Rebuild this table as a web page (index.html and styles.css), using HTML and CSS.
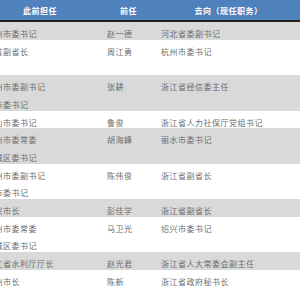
FILE: index.html
```html
<!DOCTYPE html>
<html lang="zh">
<head>
<meta charset="utf-8">
<link rel="stylesheet" href="styles.css">
</head>
<body>
<div class="sheet">
<table class="roster">
<colgroup><col class="c-prev"><col class="c-pred"><col class="c-dest"></colgroup>
<thead>
<tr><th>此前担任</th><th>前任</th><th>去向（现任职务）</th></tr>
</thead>
<tbody>
<tr class="shade"><td class="prev"><span class="t">州市委书记</span></td><td class="pred"><span class="t">赵一德</span></td><td class="dest"><span class="t">河北省委副书记</span></td></tr>
<tr><td class="prev"><span class="t">省副省长<br>&nbsp;</span></td><td class="pred"><span class="t">周江勇</span></td><td class="dest"><span class="t">杭州市委书记</span></td></tr>
<tr class="shade"><td class="prev"><span class="t">州市委副书记<br>市委书记</span></td><td class="pred"><span class="t">张耕</span></td><td class="dest"><span class="t">浙江省经信委主任</span></td></tr>
<tr><td class="prev"><span class="t">山市委书记</span></td><td class="pred"><span class="t">鲁俊</span></td><td class="dest"><span class="t">浙江省人力社保厅党组书记</span></td></tr>
<tr class="shade"><td class="prev"><span class="t">州市委常委<br>城区委书记</span></td><td class="pred"><span class="t">胡海峰</span></td><td class="dest"><span class="t">丽水市委书记</span></td></tr>
<tr><td class="prev"><span class="t">州市委副书记<br>市委书记</span></td><td class="pred"><span class="t">陈伟俊</span></td><td class="dest"><span class="t">浙江省副省长</span></td></tr>
<tr class="shade"><td class="prev"><span class="t">兴市长</span></td><td class="pred"><span class="t">彭佳学</span></td><td class="dest"><span class="t">浙江省副省长</span></td></tr>
<tr><td class="prev"><span class="t">州市委常委<br>城区委书记</span></td><td class="pred"><span class="t">马卫光</span></td><td class="dest"><span class="t">绍兴市委书记</span></td></tr>
<tr class="shade"><td class="prev"><span class="t">江省水利厅厅长</span></td><td class="pred"><span class="t">赵光君</span></td><td class="dest"><span class="t">浙江省人大常委会副主任</span></td></tr>
<tr><td class="prev"><span class="t">州市长</span></td><td class="pred"><span class="t">陈新</span></td><td class="dest"><span class="t">浙江省政府秘书长</span></td></tr>
</tbody>
</table>
</div>
</body>
</html>
```

FILE: styles.css
```css
html, body {
  margin: 0;
  padding: 0;
  background: #ffffff;
}

.sheet {
  width: 300px;
  height: 300px;
  overflow: hidden;
}

.roster {
  margin-left: -24px;
  width: 328px;
  table-layout: fixed;
  border-collapse: separate;
  border-spacing: 0;
  font-family: "Noto Sans CJK SC", "Noto Sans", sans-serif;
  font-size: 8px;
  letter-spacing: 0.5px;
  color: #6c6c6c;
}

.c-prev { width: 128px; }
.c-pred { width: 49px; }
.c-dest { width: 151px; }

.roster th {
  background: #4f81bd;
  color: #ffffff;
  font-weight: bold;
  height: 18px;
  line-height: 18px;
  padding: 2px 0 0;
  border-bottom: 2px solid #1e1e1e;
  text-align: center;
  white-space: nowrap;
}

.roster td {
  padding: 0;
  line-height: 17.7px;
  vertical-align: top;
  text-align: left;
  white-space: nowrap;
}

.roster .prev { padding-left: 18.5px; }
.roster .pred { padding-left: 3px; }
.roster .dest { padding-left: 8px; }

.shade td {
  background: #d9d9d9;
}

.t {
  line-height: 8px;
  vertical-align: -3px;
}
```
